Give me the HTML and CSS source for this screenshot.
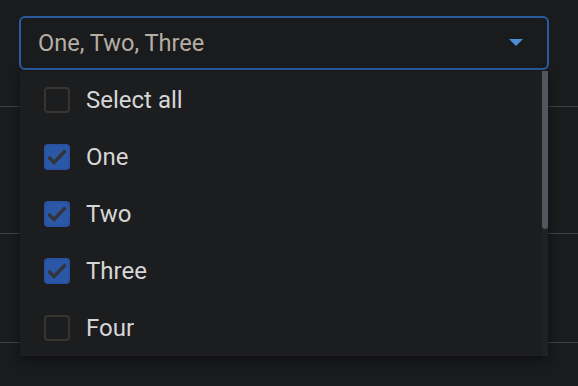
FILE: index.html
```html
<!DOCTYPE html>
<html>
<head>
<meta charset="utf-8">
<link rel="stylesheet" href="styles.css">
</head>
<body>
<div class="page">
  <div class="field">
    <div class="select">
      <span class="value">One, Two, Three</span>
      <svg class="arrow" width="14" height="7" viewBox="0 0 14 7"><path d="M0 0 L14 0 L7 7 Z" fill="#4a8fd8"/></svg>
    </div>
    <div class="menu">
      <ul class="list">
        <li class="item"><span class="box"></span><span class="label">Select all</span></li>
        <li class="item"><span class="box checked"><svg width="22" height="22" viewBox="0 0 22 22"><path d="M2.5 11 L8 16.5 L19.5 4.5" fill="none" stroke="#32353a" stroke-width="3.4"/></svg></span><span class="label">One</span></li>
        <li class="item"><span class="box checked"><svg width="22" height="22" viewBox="0 0 22 22"><path d="M2.5 11 L8 16.5 L19.5 4.5" fill="none" stroke="#32353a" stroke-width="3.4"/></svg></span><span class="label">Two</span></li>
        <li class="item"><span class="box checked"><svg width="22" height="22" viewBox="0 0 22 22"><path d="M2.5 11 L8 16.5 L19.5 4.5" fill="none" stroke="#32353a" stroke-width="3.4"/></svg></span><span class="label">Three</span></li>
        <li class="item"><span class="box"></span><span class="label">Four</span></li>
      </ul>
      <div class="scrollbar"><div class="thumb"></div></div>
    </div>
  </div>
  <div class="rows">
    <div class="row r1"></div>
    <div class="row r2"></div>
    <div class="row r3"></div>
  </div>
</div>
</body>
</html>
```
FILE: styles.css
```css
html, body {
  margin: 0;
  padding: 0;
  background: #1a1b1d;
  font-family: Roboto, "Noto Sans", sans-serif;
  overflow: hidden;
}
.page {
  position: relative;
  width: 578px;
  height: 386px;
}
.field {
  position: relative;
  z-index: 2;
  padding: 16px 29px 0 19px;
}
.select {
  box-sizing: border-box;
  height: 54px;
  border: 2px solid #2c5aa2;
  border-radius: 6px;
  display: flex;
  align-items: center;
  justify-content: space-between;
  padding: 0 24px 0 17px;
}
.value {
  color: #b5aea4;
  font-size: 23.6px;
  margin-top: -1px;
}
.arrow {
  display: block;
  margin-top: -1px;
}
.menu {
  position: absolute;
  left: 20px;
  top: 71px;
  width: 528px;
  height: 285px;
  background: #1c1d1f;
  box-shadow: 0 4px 10px rgba(0,0,0,0.45);
  display: flex;
}
.list {
  list-style: none;
  margin: 0;
  padding: 0;
  flex: 1;
  overflow: hidden;
}
.scrollbar {
  width: 6px;
  background: #1f2224;
  align-self: stretch;
}
.thumb {
  height: 158px;
  background: #51575c;
  border-radius: 0 0 3px 3px;
}
.item {
  height: 57px;
  display: flex;
  align-items: center;
  padding-left: 24px;
  gap: 16px;
}
.box {
  box-sizing: border-box;
  width: 26px;
  height: 26px;
  border: 2px solid #36352f;
  border-radius: 4px;
  display: flex;
  align-items: center;
  justify-content: center;
}
.box.checked {
  background: #2b58a6;
  border-color: #2a52a0;
}
.label {
  color: #d6d6d6;
  font-size: 24px;
}
.rows {
  position: absolute;
  left: 0;
  top: 0;
  width: 578px;
  z-index: 1;
}
.row {
  border-bottom: 1px solid #3d3f42;
}
.r1 { height: 106px; }
.r2 { height: 126px; }
.r3 { height: 108px; }
```
